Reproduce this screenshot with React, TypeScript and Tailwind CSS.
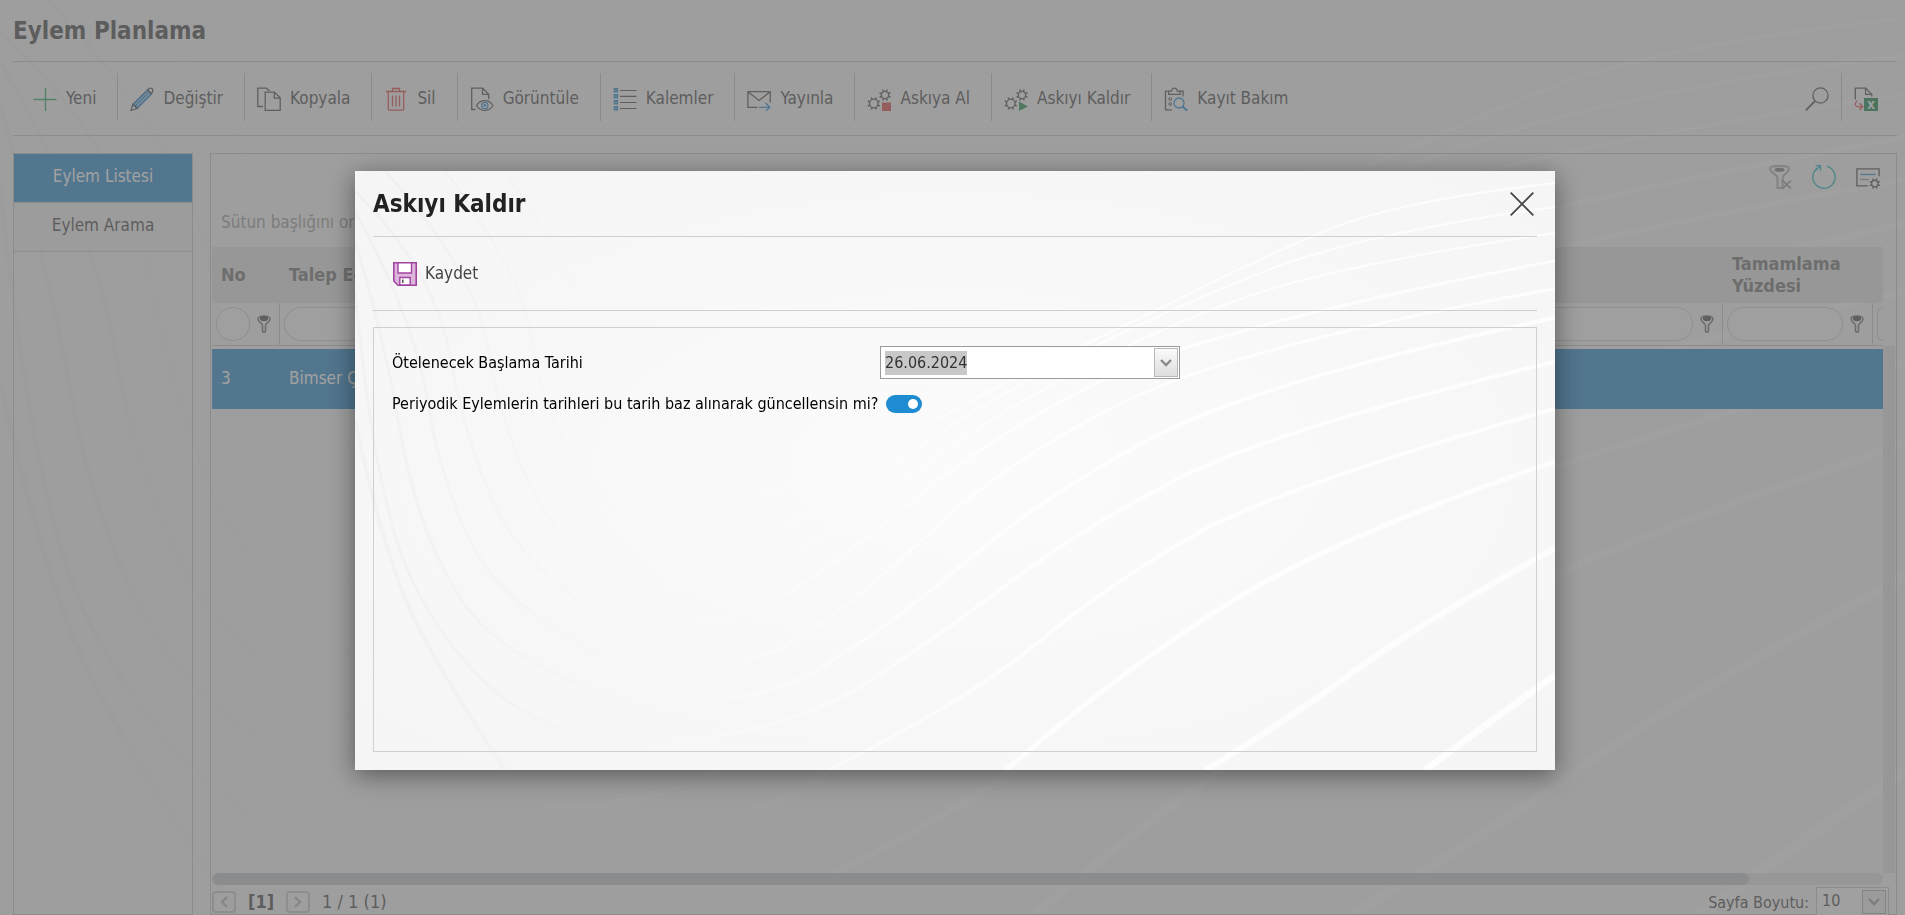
import { useEffect, useId, useRef, useState } from 'react';
import type { ReactNode } from 'react';

type Point = [number, number];

const lightWaves: { width: number; points: Point[] }[] = [
  { width: 7, points: [[1200, 505], [1130, 555], [1070, 600]] },
  { width: 6, points: [[1200, 378], [1060, 456], [940, 545], [851, 600]] },
  { width: 5, points: [[1200, 291], [983, 365], [767, 499], [651, 600]] },
  { width: 4, points: [[1200, 238], [921, 317], [751, 416], [612, 531], [473, 600]] },
  { width: 4, points: [[1200, 191], [921, 258], [728, 357], [597, 456], [442, 560], [304, 574]] },
  { width: 4, points: [[1200, 147], [905, 210], [689, 325], [535, 456], [396, 540], [270, 531]] },
  { width: 3, points: [[1200, 118], [882, 175], [651, 290], [497, 436], [381, 505], [265, 495]] },
  { width: 3, points: [[1200, 90], [860, 155], [640, 262], [480, 395], [370, 460], [260, 455]] },
  { width: 2, points: [[1200, 62], [1000, 92], [830, 145], [630, 248], [480, 362], [370, 420], [260, 415]] },
  { width: 2, points: [[1200, 36], [1010, 62], [820, 135], [620, 236], [490, 330], [370, 380], [300, 366]] },
  { width: 2, points: [[1200, 12], [1040, 30], [900, 90], [780, 150], [620, 226], [500, 298], [400, 326]] },
];

const darkWaves: { width: number; points: Point[] }[] = [
  { width: 4, points: [[0, 250], [30, 390], [90, 510], [150, 600]] },
  { width: 3, points: [[0, 120], [20, 330], [90, 480], [200, 570], [304, 574]] },
  { width: 3, points: [[0, 70], [30, 170], [60, 350], [140, 490], [270, 531]] },
  { width: 3, points: [[0, 40], [60, 150], [85, 310], [150, 440], [265, 495]] },
  { width: 3, points: [[0, 20], [80, 100], [110, 270], [170, 400], [260, 455]] },
  { width: 3, points: [[30, 0], [120, 100], [145, 250], [200, 370], [260, 415]] },
  { width: 2, points: [[90, 0], [165, 100], [185, 220], [230, 320], [300, 366]] },
  { width: 2, points: [[150, 0], [220, 100], [240, 200], [300, 290], [400, 326]] },
];

function toPath(points: Point[]) {
  const [first, ...rest] = points;
  let d = `M${first[0]} ${first[1]}`;
  rest.slice(0, -1).forEach(([x, y], i) => {
    const next = rest[i + 1];
    const last = i === rest.length - 2;
    const ex = last ? next[0] : (x + next[0]) / 2;
    const ey = last ? next[1] : (y + next[1]) / 2;
    d += ` Q${x} ${y} ${ex} ${ey}`;
  });
  return d;
}

function Waves() {
  const id = useId();
  return (
    <svg
      className="absolute inset-0 w-full h-full pointer-events-none"
      viewBox="0 0 1200 600"
      preserveAspectRatio="none"
      fill="none"
      aria-hidden="true"
    >
      <defs>
        <linearGradient id={`${id}-light`} gradientUnits="userSpaceOnUse" x1="260" y1="0" x2="720" y2="0">
          <stop offset="0" stopColor="#fff" stopOpacity="0" />
          <stop offset="1" stopColor="#fff" stopOpacity="0.8" />
        </linearGradient>
        <linearGradient id={`${id}-dark`} gradientUnits="userSpaceOnUse" x1="60" y1="0" x2="290" y2="0">
          <stop offset="0" stopColor="#000" stopOpacity="0.02" />
          <stop offset="1" stopColor="#000" stopOpacity="0" />
        </linearGradient>
      </defs>
      {darkWaves.map((wave, i) => (
        <path key={i} d={toPath(wave.points)} stroke={`url(#${id}-dark)`} strokeWidth={wave.width} />
      ))}
      {lightWaves.map((wave, i) => (
        <path key={i} d={toPath(wave.points)} stroke={`url(#${id}-light)`} strokeWidth={wave.width} />
      ))}
    </svg>
  );
}

function Icon({ children }: { children: ReactNode }) {
  return (
    <svg className="w-6 h-6 shrink-0" viewBox="0 0 24 24" fill="none" stroke="#4a4a4a" strokeWidth="1.3" aria-hidden="true">
      {children}
    </svg>
  );
}

const PlusIcon = () => (
  <Icon>
    <path d="M.5 12.500h23M12.500 1v23" stroke="#22a45a" />
  </Icon>
);

const PencilIcon = () => (
  <Icon>
    <path d="M3.300 17L17.500 3l4 4L7.500 21z" stroke="#1873b8" fill="#7fbce8" />
    <path d="M1 23.500l1.800-6 4.200 4zM17.500 3l1.200-1.200c1.200-1 2.500-.8 3.400 0 1 1 1 2.400.2 3.400L21.500 6.500z" />
    <path d="M5 19L18.500 5.500" stroke="#1873b8" strokeWidth="1" />
  </Icon>
);

const CopyIcon = () => (
  <Icon>
    <path d="M6 19.500H.800V1.200h8.700l3 2.800" />
    <path d="M8.200 5.200h9.300l5.700 5.600v12.500h-15zM17.300 5.400v5.800h5.900" />
  </Icon>
);

const TrashIcon = () => (
  <Icon>
    <g stroke="#dd4541">
      <path d="M2 4.500h20M8.500 4.300V1.500h7v2.800M4.300 4.700v17c0 .9.500 1.400 1.400 1.400h12.600c.9 0 1.400-.5 1.400-1.400v-17" />
      <path d="M8.500 8.500v11M12 8.500v11M15.500 8.500v11" />
    </g>
  </Icon>
);

const ViewIcon = () => (
  <Icon>
    <path d="M5.500 22.500H1.700V1.200h11l6 6v5M12.500 1.400v6h6" />
    <path d="M6.500 18.500c4-6.500 12.500-6.500 16.500 0-4 6.500-12.500 6.500-16.500 0z" />
    <circle cx="14.800" cy="18.500" r="3.200" stroke="#1f87d0" />
    <circle cx="14.800" cy="18.500" r=".8" stroke="#1f87d0" />
  </Icon>
);

const ListIcon = () => (
  <Icon>
    <path d="M7 3.500h16.500M7 9.300h16.500M7 15.500h16.500M7 21.500h16.500" strokeWidth="1.200" />
    <path d="M1.500 1.900h2.800v2.800H1.500zM1.500 7.900h2.800v2.800H1.500zM1.500 13.900h2.800v2.800H1.500zM1.500 19.900h2.800v2.800H1.500z" stroke="#1f87d0" strokeWidth="1.700" />
  </Icon>
);

const MailIcon = () => (
  <Icon>
    <path d="M10.500 20.300H.900V4.600h22.300v11" />
    <path d="M1.200 5l10.800 8.500L22.900 5" />
    <path d="M12 20.300h10.500M18.500 16l4.300 4.300-4.300 4.200" stroke="#1f87d0" />
  </Icon>
);

function Gear({ cx, cy, r }: { cx: number; cy: number; r: number }) {
  return (
    <g transform={`translate(${cx} ${cy})`}>
      <circle r={r} />
      {[22, 67, 112, 157, 202, 247, 292, 337].map((angle) => (
        <path key={angle} d={`M0 ${-r}v-2.200`} transform={`rotate(${angle})`} strokeWidth="1.500" />
      ))}
    </g>
  );
}

const SuspendIcon = () => (
  <Icon>
    <Gear cx={6.800} cy={16.500} r={4.300} />
    <Gear cx={18} cy={8} r={3.700} />
    <path d="M15 15.500h9v8.500h-9z" fill="#dd4541" stroke="none" />
  </Icon>
);

const ResumeIcon = () => (
  <Icon>
    <Gear cx={6.800} cy={16.500} r={4.300} />
    <Gear cx={18} cy={8} r={3.700} />
    <path d="M15 14.500l9 5-9 4.500z" fill="#1f8a4a" stroke="none" />
  </Icon>
);

const RecordIcon = () => (
  <Icon>
    <path d="M8 22.800H1.500V4.200h3M19 9.500V4.200h-3" />
    <path d="M4.700 7.300V4.200h2.800c0-4 5.800-4 5.800 0H16v3.100z" />
    <circle cx="6.200" cy="12" r="1.400" strokeWidth="1" />
    <circle cx="6.200" cy="17" r="1.400" strokeWidth="1" />
    <circle cx="15" cy="16" r="5" stroke="#1f87d0" />
    <path d="M18.500 19.500l4.800 4.300" stroke="#1f87d0" strokeWidth="2" />
  </Icon>
);

const SearchIcon = () => (
  <Icon>
    <circle cx="15.500" cy="8.500" r="7.600" />
    <path d="M10 14L.800 23.300" strokeWidth="1.800" />
  </Icon>
);

const ExcelIcon = () => (
  <Icon>
    <path d="M1.300 12.500V1.200h10.500l6 6.200v2M11.600 1.400v6h6" />
    <path d="M3.500 13.500c-4 3-2 6.500 1 6.300h4M5.500 16.300l3.300 3.500-3.300 3.200" stroke="#dd4541" />
    <path d="M10 11h14v13H10z" fill="#128046" stroke="none" />
    <text x="17" y="21.500" textAnchor="middle" fill="#fff" stroke="none" fontSize="11" fontWeight="bold">X</text>
  </Icon>
);

const ClearFilterIcon = () => (
  <Icon>
    <g stroke="#b0b0b0">
      <path d="M2 3.500c0-3.500 19-3.500 19 0 0 4.500-6.500 5.500-6.500 10v9.500h-5v-9.500c0-4.500-7.500-5.500-7.500-10z" strokeWidth="2.200" />
      <ellipse cx="11.500" cy="4.800" rx="5" ry="2" fill="#777" stroke="none" />
      <path d="M14.500 15.500l8.500 8M23 15.500l-8.500 8" stroke="#8c8c8c" strokeWidth="1.600" />
    </g>
  </Icon>
);

const RefreshIcon = () => (
  <Icon>
    <path d="M15 1.300A11.200 11.200 0 1 1 8.300 1.500M3.500.700h5v5M8.300.900L2.500 6.500" stroke="#14b0ba" />
  </Icon>
);

const CustomizeIcon = () => (
  <Icon>
    <path d="M12 20.800H.900V3.800h22.200v7.500" />
    <path d="M4.500 9.500h15" stroke="#1f87d0" />
    <path d="M4.500 14.500h8" stroke="#888" />
    <Gear cx={18.800} cy={18.500} r={3.200} />
  </Icon>
);

const SaveIcon = () => (
  <Icon>
    <path d="M.800.800h22.400v22.400H5L.800 19z" fill="#deb5dc" stroke="#a144a0" strokeWidth="1.600" />
    <path d="M5 .800h13.500V11H5z" fill="#fff" stroke="#a144a0" strokeWidth="1.400" />
    <path d="M6.800 23v-7.500h10.400V23z" fill="#fff" stroke="#a144a0" strokeWidth="1.400" />
    <path d="M9.800 17.500v3.500" stroke="#444" strokeWidth="1.400" />
  </Icon>
);

const CloseIcon = () => (
  <Icon>
    <path d="M.700.700l22.600 22.600M23.300.700L.700 23.300" stroke="#444" strokeWidth="1.800" />
  </Icon>
);

const FunnelIcon = () => (
  <svg className="w-3.5 h-[18px] shrink-0" viewBox="0 0 14 18" fill="none" aria-hidden="true">
    <path d="M1 4c0-4 12-4 12 0 0 3-4 4-4.500 6.500V16c0 1.500-3 1.500-3 0v-5.500C5 8 1 7 1 4z" stroke="#707070" strokeWidth="1.600" />
    <ellipse cx="7" cy="3.600" rx="4.200" ry="2.600" fill="#4a4a4a" />
  </svg>
);

const ChevronIcon = ({ className }: { className: string }) => (
  <svg className={className} viewBox="0 0 12 8" fill="none" aria-hidden="true">
    <path d="M1 1l5 5 5-5" stroke="currentColor" strokeWidth="2.400" />
  </svg>
);

const toolbarItems = [
  { name: 'Yeni', icon: <PlusIcon /> },
  { name: 'Değiştir', icon: <PencilIcon /> },
  { name: 'Kopyala', icon: <CopyIcon /> },
  { name: 'Sil', icon: <TrashIcon /> },
  { name: 'Görüntüle', icon: <ViewIcon /> },
  { name: 'Kalemler', icon: <ListIcon /> },
  { name: 'Yayınla', icon: <MailIcon /> },
  { name: 'Askıya Al', icon: <SuspendIcon /> },
  { name: 'Askıyı Kaldır', icon: <ResumeIcon /> },
  { name: 'Kayıt Bakım', icon: <RecordIcon /> },
];

function Toolbar() {
  return (
    <div className="flex items-center justify-between border-y border-[#c6c6c6] pt-[11px] pb-[14px] pr-[19px]">
      <div className="flex divide-x divide-[#c0c0c0] pl-2">
        {toolbarItems.map((item) => (
          <button key={item.name} type="button" className="flex items-center h-12 gap-[9px] pt-1 pl-3 pr-[21px]">
            {item.icon}
            {item.name}
          </button>
        ))}
      </div>
      <div className="flex divide-x divide-[#c0c0c0]">
        <button type="button" aria-label="Ara" className="flex items-center h-12 pt-1 pr-3">
          <SearchIcon />
        </button>
        <button type="button" aria-label="Excel" className="flex items-center h-12 pt-1 pl-3">
          <ExcelIcon />
        </button>
      </div>
    </div>
  );
}

function Sidebar() {
  return (
    <nav className="w-[180px] shrink-0 border border-[#c6c6c6] text-center">
      <a href="#liste" className="block h-12 leading-[44px] bg-[#2587cb] text-white">
        Eylem Listesi
      </a>
      <a href="#arama" className="block h-[50px] leading-[44px] border-y border-[#c6c6c6] bg-[#f1f1f1]">
        Eylem Arama
      </a>
    </nav>
  );
}

function FilterCell({ label }: { label: string }) {
  return (
    <td className="p-0 border-r border-b border-[#c6c6c6]">
      <div className="flex items-center h-[42px] gap-[7px] pl-1 pr-2">
        <input
          type="text"
          aria-label={label}
          className="flex-1 min-w-0 h-[34px] px-3 rounded-full border border-[#cacaca] bg-[#f9f9f9]"
        />
        <FunnelIcon />
      </div>
    </td>
  );
}

function ActionTable() {
  return (
    <table className="w-full table-fixed border-separate border-spacing-0 text-left">
      <colgroup>
        <col className="w-[68px]" />
        <col className="w-[420px]" />
        <col />
        <col className="w-[150px]" />
        <col className="w-[10px]" />
      </colgroup>
      <thead>
        <tr className="h-14 bg-[#e4e4e4] text-lg leading-[22px] text-[#707070]">
          <th className="p-0 pl-[9px]">No</th>
          <th className="p-0 pl-[9px]">Talep Eden</th>
          <th className="p-0" />
          <th className="p-0 pl-[9px]">
            Tamamlama
            <br />
            Yüzdesi
          </th>
          <th className="p-0" />
        </tr>
      </thead>
      <tbody>
        <tr>
          <FilterCell label="No" />
          <FilterCell label="Talep Eden" />
          <FilterCell label="Açıklama" />
          <FilterCell label="Tamamlama Yüzdesi" />
          <td className="p-0 border-b border-[#c6c6c6]">
            <div className="h-[34px] w-[6px] ml-1 rounded-l-full border border-r-0 border-[#cacaca]" />
          </td>
        </tr>
        <tr className="h-[3px]">
          <td colSpan={5} className="p-0" />
        </tr>
        <tr className="h-[60px] bg-[#2587cb] text-white">
          <td className="p-0 pl-[9px]">3</td>
          <td className="p-0 pl-[9px]">Bimser Çözüm</td>
          <td className="p-0" />
          <td className="p-0" />
          <td className="p-0" />
        </tr>
      </tbody>
    </table>
  );
}

function Pager() {
  return (
    <div className="flex items-start justify-between h-[29px] shrink-0 pr-[7px] text-lg leading-[22px]">
      <div className="flex items-center pt-[6px]">
        <button type="button" aria-label="Önceki" className="flex items-center justify-center w-6 h-[22px] border-2 border-[#c8c8c8] rounded-sm text-[#b4b4b4]">
          <ChevronIcon className="w-3 h-2 rotate-90" />
        </button>
        <span className="px-3 font-bold">[1]</span>
        <button type="button" aria-label="Sonraki" className="flex items-center justify-center w-6 h-[22px] border-2 border-[#c8c8c8] rounded-sm text-[#b4b4b4]">
          <ChevronIcon className="w-3 h-2 -rotate-90" />
        </button>
        <span className="pl-3">1 / 1 (1)</span>
      </div>
      <div className="flex items-start gap-[7px] text-base leading-[22px]">
        <label htmlFor="page-size" className="pt-[7px]">
          Sayfa Boyutu:
        </label>
        <div className="flex w-[73px] h-8 mt-[2px] border border-[#c6c6c6] bg-[#fbfbfb]">
          <select id="page-size" className="flex-1 min-w-0 h-[26px] pl-[5px] appearance-none">
            <option>10</option>
          </select>
          <span className="flex items-center justify-center w-6 h-6 mt-[2px] mr-[2px] border border-[#b0b0b0] bg-[#ededed] text-[#999]">
            <ChevronIcon className="w-3 h-2" />
          </span>
        </div>
      </div>
    </div>
  );
}

function ListPanel() {
  return (
    <main className="flex flex-col flex-1 min-w-0 border border-[#c6c6c6] pl-px">
      <div className="flex justify-between h-[93px] shrink-0">
        <p className="self-end pb-3 pl-[9px] text-[#999]">Sütun başlığını oraya</p>
        <div className="flex items-start gap-5 pt-[11px] pr-4">
          <button type="button" aria-label="Filtreyi temizle">
            <ClearFilterIcon />
          </button>
          <button type="button" aria-label="Yenile">
            <RefreshIcon />
          </button>
          <button type="button" aria-label="Özelleştir">
            <CustomizeIcon />
          </button>
        </div>
      </div>
      <div className="flex flex-1 min-h-0">
        <div className="flex-1 min-w-0 overflow-hidden">
          <ActionTable />
        </div>
        <div className="w-3 mt-[99px] mr-px bg-[#e4e4e4]" />
      </div>
      <div className="h-3 shrink-0 mr-[13px] rounded-full bg-[#e4e4e4]">
        <div className="h-full w-[92%] rounded-full bg-[#c2c6cb]" />
      </div>
      <Pager />
    </main>
  );
}

function ResumeDialog() {
  const [updateDates, setUpdateDates] = useState(true);
  const dateRef = useRef<HTMLInputElement>(null);

  useEffect(() => {
    dateRef.current?.focus();
    dateRef.current?.select();
  }, []);

  return (
    <div className="fixed inset-0 z-50 flex items-start justify-center pt-[171px] pl-[5px] bg-[#6c6c6c]/64">
      <div
        role="dialog"
        aria-labelledby="dialog-title"
        className="relative w-[1200px] bg-radial from-[#fbfbfb] to-[#f5f5f5] shadow-[0_5px_24px_rgba(0,0,0,0.45)]"
      >
        <Waves />
        <div className="relative px-[18px] pb-[18px]">
          <div className="flex items-center justify-between h-[66px] border-b border-[#cfcfcf] pr-[3px]">
            <h2 id="dialog-title" className="text-2xl font-bold text-[#222]">
              Askıyı Kaldır
            </h2>
            <button type="button" aria-label="Kapat">
              <CloseIcon />
            </button>
          </div>
          <div className="flex items-center h-[74px] border-b border-[#cfcfcf] pl-5">
            <button type="button" className="flex items-center gap-2">
              <SaveIcon />
              Kaydet
            </button>
          </div>
          <form className="flex flex-col h-[425px] mt-4 pt-[18px] pl-[18px] border border-[#cfcfcf] text-base text-black">
            <div className="flex items-center h-[33px]">
              <label htmlFor="start-date" className="w-[488px]">
                Ötelenecek Başlama Tarihi
              </label>
              <div className="flex w-[300px] h-full p-px border border-[#9b9b9b] bg-white">
                <input
                  ref={dateRef}
                  id="start-date"
                  type="text"
                  defaultValue="26.06.2024"
                  className="flex-1 min-w-0 pl-[3px] outline-none text-[#333] selection:bg-[#c8c8c8] selection:text-[#333]"
                />
                <button
                  type="button"
                  aria-label="Takvim"
                  className="flex items-center justify-center w-6 border border-[#b8b8b8] bg-linear-to-b from-[#fafafa] to-[#dedede] text-[#8a8a8a]"
                >
                  <ChevronIcon className="w-3 h-2" />
                </button>
              </div>
            </div>
            <div className="flex items-center gap-2 mt-[13px]">
              <label htmlFor="update-dates">
                Periyodik Eylemlerin tarihleri bu tarih baz alınarak güncellensin mi?
              </label>
              <input
                id="update-dates"
                type="checkbox"
                role="switch"
                checked={updateDates}
                onChange={(e) => setUpdateDates(e.target.checked)}
                className="appearance-none flex items-center w-9 h-[18px] px-1 rounded-full bg-[#999] checked:bg-[#1f8bd0] before:block before:w-[10px] before:h-[10px] before:rounded-full before:bg-white checked:before:ml-auto"
              />
            </div>
          </form>
        </div>
      </div>
    </div>
  );
}

export default function App() {
  return (
    <div className="relative h-screen overflow-hidden bg-[#f7f7f7] font-['DejaVu_Sans_Condensed','DejaVu_Sans',sans-serif] text-[17px] text-[#444]">
      <Waves />
      <div className="relative flex flex-col h-full pl-[13px] pr-2">
        <h1 className="h-[61px] shrink-0 leading-[62px] text-2xl font-bold">Eylem Planlama</h1>
        <Toolbar />
        <div className="flex flex-1 min-h-0 gap-[17px] pt-[17px]">
          <Sidebar />
          <ListPanel />
        </div>
      </div>
      <ResumeDialog />
    </div>
  );
}
